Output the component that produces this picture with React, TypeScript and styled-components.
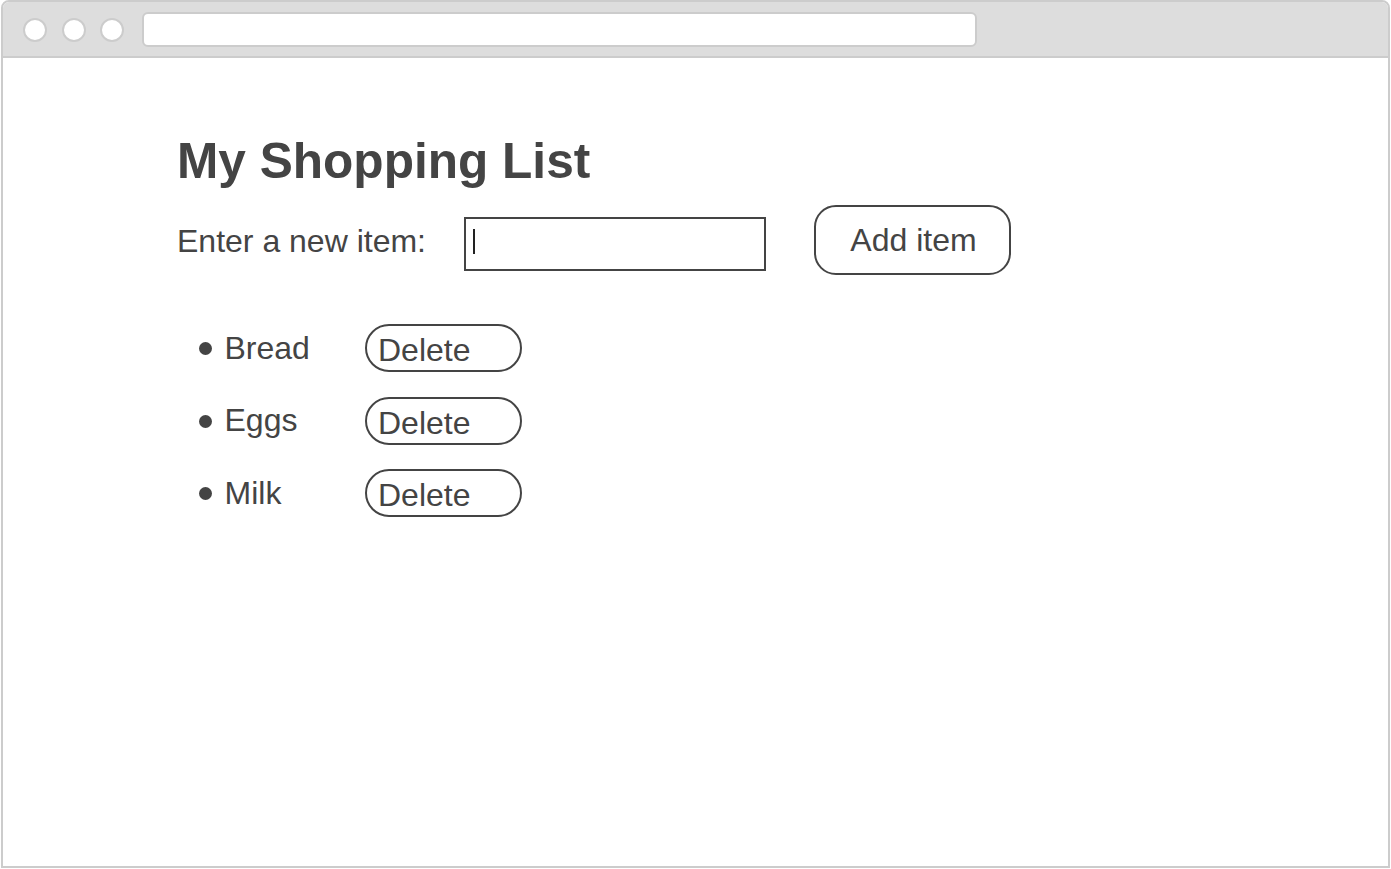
import styled, { createGlobalStyle } from "styled-components";

const GlobalStyle = createGlobalStyle`
    html, body {
        margin: 0;
        padding: 0;
        background: #ffffff;
    }

    body {
        font-family: "Liberation Sans", Arial, sans-serif;
        color: #444444;
    }
`;

const Frame = styled.div`
    box-sizing: border-box;
    width: 1389px;
    height: 868px;
    margin-left: 1px;
    border: 2px solid #cccccc;
    border-radius: 8px 8px 0 0;
    display: flex;
    flex-direction: column;
    overflow: hidden;
`;

const TitleBar = styled.div`
    height: 53px;
    flex-shrink: 0;
    background-color: #dddddd;
    border-bottom: 2px solid #cccccc;
    display: flex;
    align-items: center;
    padding: 1px 0 0 20px;
    box-sizing: content-box;
`;

const Dots = styled.div`
    display: flex;
    gap: 14.5px;
    margin-right: 18px;
`;

const Dot = styled.span`
    box-sizing: border-box;
    width: 24px;
    height: 24px;
    border-radius: 50%;
    background: #ffffff;
    border: 2px solid #cccccc;
`;

const AddressBar = styled.div`
    box-sizing: border-box;
    width: 835px;
    height: 35px;
    background: #ffffff;
    border: 2px solid #cccccc;
    border-radius: 6px;
`;

const Content = styled.main`
    padding: 74px 0 0 174px;
    display: flex;
    flex-direction: column;
`;

const Title = styled.h1`
    margin: 0;
    font-size: 49.6px;
    font-weight: 700;
    line-height: normal;
    color: #444444;
`;

const FormRow = styled.div`
    display: flex;
    align-items: center;
    margin-top: 15px;
    height: 70px;
`;

const Label = styled.label`
    font-size: 32px;
    width: 287px;
    flex-shrink: 0;
    padding-top: 3px;
`;

const TextBox = styled.div`
    box-sizing: border-box;
    width: 302px;
    height: 54px;
    border: 2px solid #444444;
    display: flex;
    align-items: center;
    padding-left: 7px;
    margin-top: 8px;
`;

const Caret = styled.span`
    width: 2px;
    height: 25px;
    background: #222222;
    margin-bottom: 6px;
`;

const PillButton = styled.button<{ $width: number; $height: number; $radius: number; $left?: boolean }>`
    box-sizing: border-box;
    width: ${(p) => p.$width}px;
    height: ${(p) => p.$height}px;
    border: 2px solid #444444;
    border-radius: ${(p) => p.$radius}px;
    background: #ffffff;
    color: #444444;
    font-family: "Liberation Sans", Arial, sans-serif;
    font-size: 32px;
    display: flex;
    align-items: center;
    justify-content: ${(p) => (p.$left ? "flex-start" : "center")};
    padding: ${(p) => (p.$left ? "5px 0 0 11px" : "0 0 0 2px")};
    cursor: pointer;
`;

const AddButton = styled(PillButton)`
    margin-left: 48px;
`;

const List = styled.ul`
    list-style: none;
    margin: 49px 0 0 0;
    padding: 0 0 0 21.5px;
    display: flex;
    flex-direction: column;
    gap: 24.5px;
`;

const Item = styled.li`
    display: flex;
    align-items: center;
    height: 48px;
    font-size: 32px;
`;

const Bullet = styled.span`
    width: 13px;
    height: 13px;
    border-radius: 50%;
    background: #444444;
    margin-right: 13px;
    margin-top: 1px;
    flex-shrink: 0;
`;

const ItemName = styled.span`
    width: 140.5px;
    flex-shrink: 0;
`;

const items = ["Bread", "Eggs", "Milk"];

const App = () => {
    return (
        <>
            <GlobalStyle />
            <Frame>
                <TitleBar>
                    <Dots>
                        <Dot />
                        <Dot />
                        <Dot />
                    </Dots>
                    <AddressBar />
                </TitleBar>
                <Content>
                    <Title>My Shopping List</Title>
                    <FormRow>
                        <Label>Enter a new item:</Label>
                        <TextBox>
                            <Caret />
                        </TextBox>
                        <AddButton $width={197} $height={70} $radius={22}>
                            Add item
                        </AddButton>
                    </FormRow>
                    <List>
                        {items.map((name) => (
                            <Item key={name}>
                                <Bullet />
                                <ItemName>{name}</ItemName>
                                <PillButton $width={157} $height={48} $radius={24} $left>
                                    Delete
                                </PillButton>
                            </Item>
                        ))}
                    </List>
                </Content>
            </Frame>
        </>
    );
};

export default App;
